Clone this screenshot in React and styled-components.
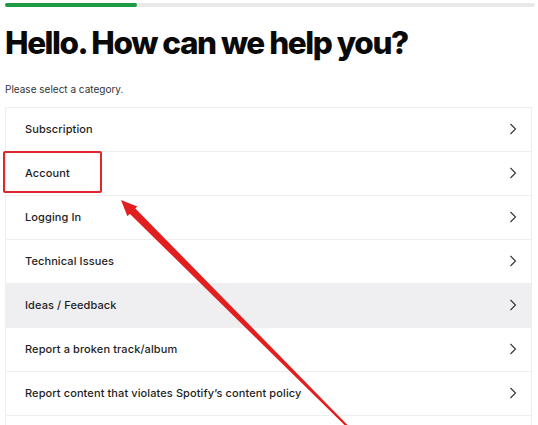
import React from "react";
import styled, { createGlobalStyle } from "styled-components";

const Global = createGlobalStyle`
  html, body { margin: 0; padding: 0; background: #fff; }
  body { font-family: Inter, "Liberation Sans", Arial, sans-serif; color: #181818; overflow: hidden; }
`;

const Page = styled.div`
  position: relative;
  width: 538px;
  height: 425px;
  overflow: hidden;
  padding: 3px 6px 0 5px;
  box-sizing: border-box;
`;

const Progress = styled.div`
  height: 4px;
  margin-right: -3px;
  background: #e9e9e9;
  border-radius: 2px;
  display: flex;
`;

const ProgressFill = styled.div`
  width: 132px;
  background: #1e9a45;
  border-radius: 2px;
`;

const Title = styled.h1`
  margin: 16px 0 0;
  font-family: Inter, "Liberation Sans", sans-serif;
  font-weight: 800;
  font-size: 31.5px;
  line-height: 40px;
  letter-spacing: -1.45px;
  color: #0a0a0a;
`;

const Subtitle = styled.p`
  margin: 19px 0 0;
  font-size: 10px;
  line-height: 14px;
  color: #333;
`;

const List = styled.ul`
  list-style: none;
  margin: 11px 0 0;
  padding: 0;
  border-top: 1px solid #efefef;
`;

const Row = styled.li`
  height: 42px;
  display: flex;
  align-items: center;
  justify-content: space-between;
  padding: 0 14px 1px 19px;
  border: 1px solid #efefef;
  border-top: none;
  background: ${(p) => (p.$active ? "#efeff1" : "#fff")};
  font-size: 11px;
  font-weight: 500;
  color: #1e1e1e;
  letter-spacing: 0.1px;
`;

const Chevron = () => (
  <svg width="8" height="12" viewBox="0 0 8 12">
    <path d="M1.5 1 L6.5 6 L1.5 11" fill="none" stroke="#333" strokeWidth="1.1" />
  </svg>
);

const Highlight = styled.div`
  position: absolute;
  left: 3px;
  top: 151px;
  width: 95px;
  height: 38px;
  border: 2px solid #e0262a;
  border-radius: 2px;
`;

const ArrowSvg = styled.svg`
  position: absolute;
  left: 0;
  top: 0;
  pointer-events: none;
`;

const items = [
  "Subscription",
  "Account",
  "Logging In",
  "Technical Issues",
  "Ideas / Feedback",
  "Report a broken track/album",
  "Report content that violates Spotify’s content policy",
  "",
];

export default function App() {
  return (
    <>
      <Global />
      <Page>
        <Progress>
          <ProgressFill />
        </Progress>
        <Title>Hello. How can we help you?</Title>
        <Subtitle>Please select a category.</Subtitle>
        <List>
          {items.map((t, i) => (
            <Row key={i} $active={i === 4}>
              <span>{t}</span>
              <Chevron />
            </Row>
          ))}
        </List>
        <Highlight />
        <ArrowSvg width="538" height="425" viewBox="0 0 538 425">
          <polygon points="127.4,211.4 132.9,205.9 347.8,425.3 346.2,426.7" fill="#e11f1f" />
          <polygon points="121,200 137.3,206.4 127.4,216.3" fill="#e11f1f" />
        </ArrowSvg>
      </Page>
    </>
  );
}
